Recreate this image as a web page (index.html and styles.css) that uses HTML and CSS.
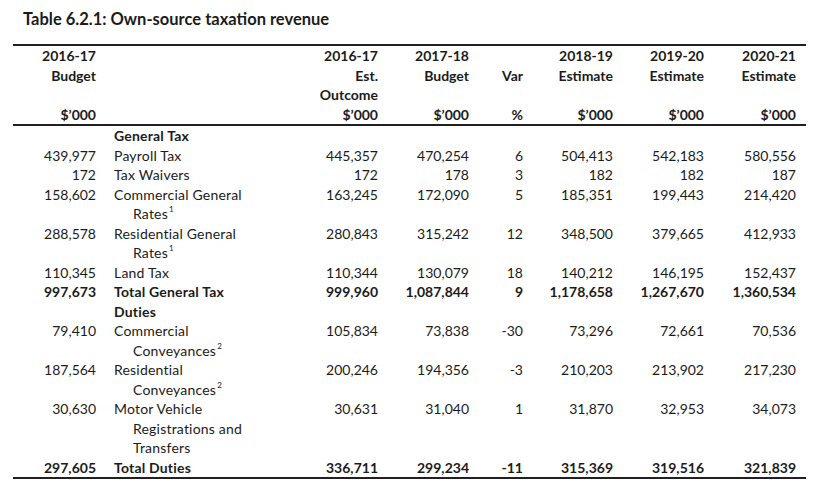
FILE: index.html
```html
<!DOCTYPE html>
<html lang="en">
<head>
<meta charset="utf-8">
<title>Table 6.2.1: Own-source taxation revenue</title>
<link rel="stylesheet" href="styles.css">
</head>
<body>
<div class="page">
  <h1 class="title">Table 6.2.1: Own-source taxation revenue</h1>
  <table class="fin">
    <colgroup>
      <col class="w-c1"><col class="w-label"><col class="w-c3"><col class="w-c4">
      <col class="w-var"><col class="w-c6"><col class="w-c7"><col class="w-c8">
    </colgroup>
    <thead>
      <tr>
        <th class="num">2016-17<br>Budget<br><br>$’000</th>
        <th class="label"></th>
        <th class="num">2016-17<br>Est.<br>Outcome<br>$’000</th>
        <th class="num">2017-18<br>Budget<br><br>$’000</th>
        <th class="num"><br>Var<br><br>%</th>
        <th class="num">2018-19<br>Estimate<br><br>$’000</th>
        <th class="num">2019-20<br>Estimate<br><br>$’000</th>
        <th class="num">2020-21<br>Estimate<br><br>$’000</th>
      </tr>
    </thead>
    <tbody>
      <tr class="bold">
        <td class="num"></td><td class="label">General Tax</td>
        <td class="num"></td><td class="num"></td><td class="num"></td><td class="num"></td><td class="num"></td><td class="num"></td>
      </tr>
      <tr>
        <td class="num">439,977</td><td class="label">Payroll Tax</td>
        <td class="num">445,357</td><td class="num">470,254</td><td class="num">6</td><td class="num">504,413</td><td class="num">542,183</td><td class="num">580,556</td>
      </tr>
      <tr>
        <td class="num">172</td><td class="label">Tax Waivers</td>
        <td class="num">172</td><td class="num">178</td><td class="num">3</td><td class="num">182</td><td class="num">182</td><td class="num">187</td>
      </tr>
      <tr>
        <td class="num">158,602</td><td class="label">Commercial General<br>Rates<sup>1</sup></td>
        <td class="num">163,245</td><td class="num">172,090</td><td class="num">5</td><td class="num">185,351</td><td class="num">199,443</td><td class="num">214,420</td>
      </tr>
      <tr>
        <td class="num">288,578</td><td class="label">Residential General<br>Rates<sup>1</sup></td>
        <td class="num">280,843</td><td class="num">315,242</td><td class="num">12</td><td class="num">348,500</td><td class="num">379,665</td><td class="num">412,933</td>
      </tr>
      <tr>
        <td class="num">110,345</td><td class="label">Land Tax</td>
        <td class="num">110,344</td><td class="num">130,079</td><td class="num">18</td><td class="num">140,212</td><td class="num">146,195</td><td class="num">152,437</td>
      </tr>
      <tr class="bold">
        <td class="num">997,673</td><td class="label">Total General Tax</td>
        <td class="num">999,960</td><td class="num">1,087,844</td><td class="num">9</td><td class="num">1,178,658</td><td class="num">1,267,670</td><td class="num">1,360,534</td>
      </tr>
      <tr class="bold">
        <td class="num"></td><td class="label">Duties</td>
        <td class="num"></td><td class="num"></td><td class="num"></td><td class="num"></td><td class="num"></td><td class="num"></td>
      </tr>
      <tr>
        <td class="num">79,410</td><td class="label">Commercial<br>Conveyances<sup>2</sup></td>
        <td class="num">105,834</td><td class="num">73,838</td><td class="num">-30</td><td class="num">73,296</td><td class="num">72,661</td><td class="num">70,536</td>
      </tr>
      <tr>
        <td class="num">187,564</td><td class="label">Residential<br>Conveyances<sup>2</sup></td>
        <td class="num">200,246</td><td class="num">194,356</td><td class="num">-3</td><td class="num">210,203</td><td class="num">213,902</td><td class="num">217,230</td>
      </tr>
      <tr>
        <td class="num">30,630</td><td class="label">Motor Vehicle<br>Registrations and<br>Transfers</td>
        <td class="num">30,631</td><td class="num">31,040</td><td class="num">1</td><td class="num">31,870</td><td class="num">32,953</td><td class="num">34,073</td>
      </tr>
      <tr class="bold">
        <td class="num">297,605</td><td class="label">Total Duties</td>
        <td class="num">336,711</td><td class="num">299,234</td><td class="num">-11</td><td class="num">315,369</td><td class="num">319,516</td><td class="num">321,839</td>
      </tr>
    </tbody>
  </table>
</div>
</body>
</html>
```
FILE: styles.css
```css
html, body {
  margin: 0;
  padding: 0;
  background: #ffffff;
}

body {
  font-family: Lato, "Open Sans", "Noto Sans", sans-serif;
  color: #1b1b1b;
}

.page {
  padding: 9px 0 0 13px;
  width: 793px;
}

.title {
  margin: 0 0 15px 10px;
  font-size: 16.5px;
  line-height: 20px;
  font-weight: 700;
}

.fin {
  border-collapse: collapse;
  table-layout: fixed;
  width: 793px;
  font-size: 14px;
  line-height: 19.5px;
  border-top: 2px solid #231f20;
  border-bottom: 2px solid #231f20;
}

.w-c1 { width: 93px; }
.w-label { width: 184px; }
.w-c3 { width: 98px; }
.w-c4 { width: 91px; }
.w-var { width: 54px; }
.w-c6 { width: 90px; }
.w-c7 { width: 91px; }
.w-c8 { width: 92px; }

.fin th,
.fin td {
  padding: 0;
  vertical-align: top;
  white-space: nowrap;
}

.fin thead th {
  font-weight: 700;
  border-bottom: 2px solid #231f20;
}

.fin .num {
  text-align: right;
  padding-right: 10px;
}

.fin .label {
  text-align: left;
  padding-left: 27px;
  text-indent: -19px;
  letter-spacing: 0.2px;
}

.fin tr.bold td {
  font-weight: 700;
}

.fin sup {
  font-size: 8px;
  line-height: 0;
  vertical-align: 0;
  position: relative;
  top: -7px;
  margin-left: 1px;
}
```
